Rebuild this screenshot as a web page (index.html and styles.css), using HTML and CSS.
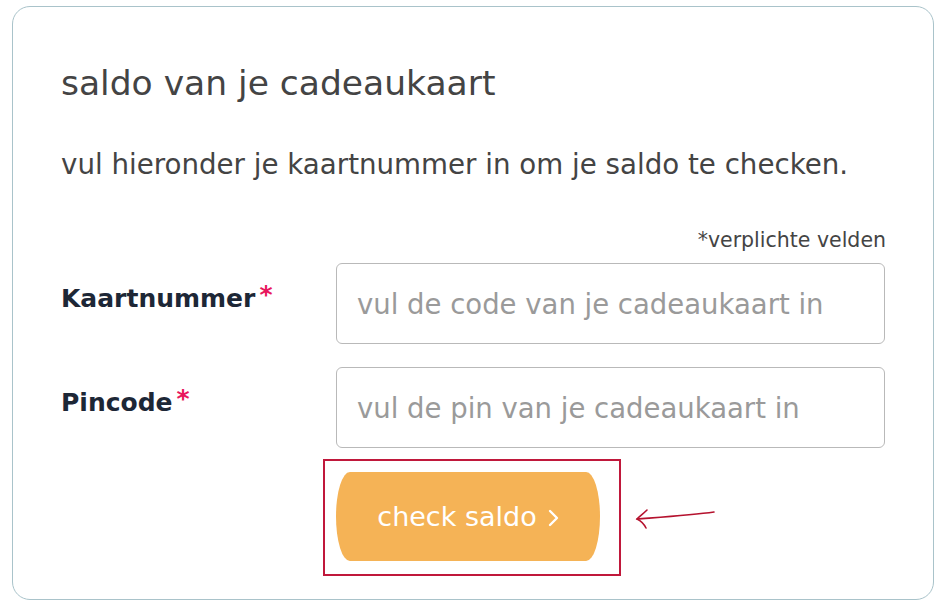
FILE: index.html
```html
<!DOCTYPE html>
<html lang="nl">
<head>
    <meta charset="UTF-8">
    <meta name="viewport" content="width=device-width, initial-scale=1.0">
    <title>Saldo cadeaukaart</title>
    <link rel="stylesheet" href="styles.css">
</head>
<body>
    <div class="card">
        <h1>saldo van je cadeaukaart</h1>
        <p class="intro">vul hieronder je kaartnummer in om je saldo te checken.</p>
        <div class="required-note">*verplichte velden</div>
        <div class="form-row">
            <label for="cardNumber">Kaartnummer<span class="star">*</span></label>
            <input type="text" id="cardNumber" placeholder="vul de code van je cadeaukaart in">
        </div>
        <div class="form-row">
            <label for="pinCode">Pincode<span class="star">*</span></label>
            <input type="text" id="pinCode" placeholder="vul de pin van je cadeaukaart in">
        </div>
        <div class="action-row">
            <div class="highlight">
                <button>check saldo
                    <svg class="chev" width="12" height="20" viewBox="0 0 12 20">
                        <path d="M3 3 L10 10 L3 17" fill="none" stroke="#fff" stroke-width="2.4" stroke-linecap="round" stroke-linejoin="round"/>
                    </svg>
                </button>
            </div>
            <svg class="arrow" width="84" height="24" viewBox="0 0 84 24">
                <path d="M81 5 C60 8 30 10 4 12" fill="none" stroke="#b5122e" stroke-width="1.6" stroke-linecap="round"/>
                <path d="M14 3 C10 7 7 9 4 12 C8 14 11 17 13 21" fill="none" stroke="#b5122e" stroke-width="1.6" stroke-linecap="round"/>
            </svg>
        </div>
    </div>
</body>
</html>
```

FILE: styles.css
```css
body {
    margin: 0;
    background: #fff;
    font-family: "DejaVu Sans", Verdana, sans-serif;
    color: #3d3d3d;
}
.card {
    margin: 6px 0 0 12px;
    width: 922px;
    height: 594px;
    border: 1px solid #a9c3ca;
    border-radius: 18px;
    padding: 0 48px 0 48px;
    box-sizing: border-box;
}
h1 {
    margin: 54px 0 0;
    font-size: 34.5px;
    font-weight: 400;
    line-height: 44px;
    color: #444;
}
.intro {
    margin: 43px 0 0;
    font-size: 27.7px;
    line-height: 34px;
    color: #444;
}
.required-note {
    margin-top: 46px;
    margin-right: -1px;
    text-align: right;
    font-size: 20.5px;
    line-height: 24px;
    color: #444;
}
.form-row {
    display: flex;
    margin-top: 11px;
}
.form-row + .form-row {
    margin-top: 23px;
}
label {
    width: 275px;
    font-size: 25px;
    font-weight: bold;
    color: #1d2736;
    padding-top: 21px;
}
.star {
    color: #e8175d;
    margin-left: 4px;
    position: relative;
    top: -4px;
}
input {
    width: 549px;
    height: 81px;
    box-sizing: border-box;
    border: 1px solid #b9b9b9;
    border-radius: 6px;
    padding: 0 20px;
    font-family: "DejaVu Sans", Verdana, sans-serif;
    font-size: 27.5px;
    color: #333;
}
input::placeholder {
    color: #9a9a9a;
}
.action-row {
    display: flex;
    align-items: center;
    margin: 11px 0 0 262px;
}
.highlight {
    border: 2px solid #c0183b;
    padding: 11px 19px 13px 11px;
}
button {
    display: flex;
    align-items: center;
    justify-content: center;
    gap: 10px;
    width: 264px;
    height: 89px;
    border: none;
    border-radius: 14px / 45px;
    background: #f5b356;
    color: #fff;
    font-family: "DejaVu Sans", Verdana, sans-serif;
    font-size: 27px;
    cursor: pointer;
}
.chev {
    margin-top: 3px;
}
.arrow {
    margin-left: 12px;
    margin-top: 2px;
}
```
